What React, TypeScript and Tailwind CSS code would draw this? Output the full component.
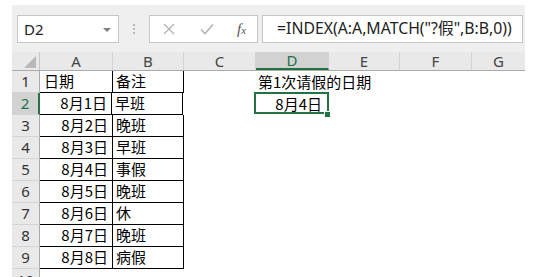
import React from "react";

const CJK = { fontFamily: '"Noto Sans CJK SC", "Noto Sans", sans-serif' };
const LAT = { fontFamily: '"Noto Sans", "Noto Sans CJK SC", sans-serif' };

const colW = [73, 71, 72, 73, 71, 72, 53]; // A..G
const colNames = ["A", "B", "C", "D", "E", "F", "G"];

const rows: { a: string; b: string; d?: string }[] = [
  { a: "日期", b: "备注", d: "第1次请假的日期" },
  { a: "8月1日", b: "早班", d: "8月4日" },
  { a: "8月2日", b: "晚班" },
  { a: "8月3日", b: "早班" },
  { a: "8月4日", b: "事假" },
  { a: "8月5日", b: "晚班" },
  { a: "8月6日", b: "休" },
  { a: "8月7日", b: "晚班" },
  { a: "8月8日", b: "病假" },
];

function Toolbar() {
  return (
    <div className="flex items-start h-[47px] bg-[#efefef] pt-[10px] pl-[5px]">
      <div className="relative w-[102px] h-[28px] bg-white border border-[#c6c6c6] flex items-center pl-[6px]">
        <span className="text-[15px] text-[#222]" style={LAT}>D2</span>
        <div className="absolute right-[7px] top-[12px] w-0 h-0 border-l-[4px] border-r-[4px] border-t-[4px] border-l-transparent border-r-transparent border-t-[#808080]" />
      </div>
      <div className="w-[30px] h-[28px] flex flex-col items-center justify-center gap-[2px]">
        <div className="w-[2px] h-[2px] bg-[#b8b8b8]" />
        <div className="w-[2px] h-[2px] bg-[#b8b8b8]" />
        <div className="w-[2px] h-[2px] bg-[#b8b8b8]" />
      </div>
      <div className="w-[109px] h-[28px] bg-white border border-[#c6c6c6] flex items-center">
        <svg width="12" height="12" viewBox="0 0 12 12" className="ml-[13px]">
          <path d="M1 1 L11 11 M11 1 L1 11" stroke="#b4b4b4" strokeWidth="1.4" fill="none" />
        </svg>
        <svg width="14" height="12" viewBox="0 0 14 12" className="ml-[25px]">
          <path d="M1 6.5 L5 10.5 L13 1.5" stroke="#b4b4b4" strokeWidth="1.6" fill="none" />
        </svg>
        <span className="ml-[23px] text-[#555] italic text-[15px] leading-none" style={{ fontFamily: '"Liberation Serif", serif' }}>
          f<span className="text-[11px]">x</span>
        </span>
      </div>
      <div className="ml-[4px] w-[261px] h-[28px] bg-white border border-[#c6c6c6] flex items-center pl-[14px]">
        <span className="text-[15.8px] text-[#222] whitespace-nowrap" style={LAT}>
          =INDEX(A:A,MATCH("?假",B:B,0))
        </span>
      </div>
    </div>
  );
}

function HeaderRow() {
  return (
    <div className="flex h-[19px] bg-[#e9e9e9] border-b border-[#ababab]">
      <div className="relative w-[28px] h-full border-r border-[#c8c8c8]">
        <svg width="12" height="12" viewBox="0 0 12 12" className="absolute right-[3px] bottom-[2px]">
          <path d="M12 0 L12 12 L0 12 Z" fill="#b9b9b9" />
        </svg>
      </div>
      {colNames.map((c, i) => {
        const sel = c === "D";
        return (
          <div
            key={c}
            className={
              "h-full flex items-center justify-center text-[15px] " +
              (i < colNames.length - 1 ? "border-r border-[#d4d4d4] " : "") +
              (sel ? "bg-[#d2d2d2] text-[#217346] border-b-2 border-b-[#217346]" : "text-[#444]")
            }
            style={{ width: colW[i], ...LAT }}
          >
            {c}
          </div>
        );
      })}
    </div>
  );
}

function DataRow({ idx, r }: { idx: number; r: { a: string; b: string; d?: string } }) {
  const n = idx + 1;
  const selRow = n === 2;
  const dateRight = n >= 2;
  return (
    <div className="flex h-[22px]" style={CJK}>
      <div
        className={
          "w-[28px] h-full flex items-center justify-center text-[15px] border-b border-[#d4d4d4] " +
          (selRow ? "bg-[#d2d2d2] text-[#217346] border-r-2 border-r-[#217346]" : "bg-[#e9e9e9] text-[#333] border-r border-r-[#ababab]")
        }
        style={LAT}
      >
        {n}
      </div>
      <div
        className={
          "h-full flex items-center text-[15px] text-black border-r border-b border-black " +
          (dateRight ? "justify-end pr-[4px]" : "justify-start pl-[4px]")
        }
        style={{ width: selRow ? 72 : 73 }}
      >
        {r.a}
      </div>
      <div className="h-full flex items-center pl-[3px] text-[15px] text-black border-r border-b border-black" style={{ width: 71 }}>
        {r.b}
      </div>
      <div className="h-full" style={{ width: 72 }} />
      <div className="relative h-full" style={{ width: 73 }}>
        {n === 1 && (
          <div className="absolute left-[2px] top-0 h-full flex items-center text-[15px] text-black whitespace-nowrap">
            {r.d}
          </div>
        )}
        {n === 2 && (
          <>
            <div className="absolute left-[-1px] top-[-1px] right-[-1px] bottom-[1px] border-2 border-[#217346]" />
            <div className="absolute h-full right-[6px] top-0 flex items-center text-[15px] text-black">{r.d}</div>
            <div className="absolute left-[69px] top-[18px] w-[7px] h-[7px] bg-[#217346] border border-white" />
          </>
        )}
      </div>
    </div>
  );
}

export default function App() {
  return (
    <div className="w-[533px] h-[277px] bg-white overflow-hidden">
      <div className="ml-[12px] mt-[5px] w-[513px] h-[272px] overflow-hidden">
        <Toolbar />
        <HeaderRow />
        {rows.map((r, i) => (
          <DataRow key={i} idx={i} r={r} />
        ))}
        <div className="flex h-[22px]" style={LAT}>
          <div className="w-[28px] h-full flex items-center justify-center text-[15px] bg-[#e9e9e9] text-[#333] border-r border-[#ababab]">
            10
          </div>
        </div>
      </div>
    </div>
  );
}
